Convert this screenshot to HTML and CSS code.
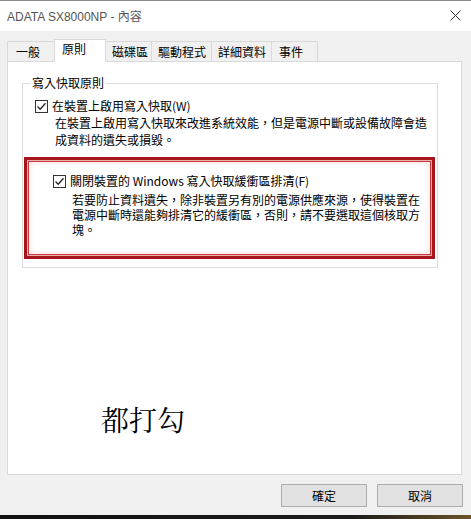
FILE: index.html
```html
<!DOCTYPE html>
<html lang="zh-Hant">
<head>
  <meta charset="UTF-8">
  <title>ADATA SX8000NP - 內容</title>
  <link rel="stylesheet" href="styles.css">
</head>
<body>
  <div class="titlebar">
    <span class="title">ADATA SX8000NP - 內容</span>
    <svg class="close" width="11" height="11" viewBox="0 0 11 11">
      <path d="M0.5 0.5 L10.5 10.5 M10.5 0.5 L0.5 10.5" stroke="#333" stroke-width="1" fill="none"/>
    </svg>
  </div>

  <div class="tabs">
    <div class="tab first">一般</div>
    <div class="tab active">原則</div>
    <div class="tab w47">磁碟區</div>
    <div class="tab w61">驅動程式</div>
    <div class="tab w61">詳細資料</div>
    <div class="tab w47">事件</div>
  </div>

  <div class="panel">
    <fieldset class="group">
      <legend>寫入快取原則</legend>
      <label class="option first-option">
        <span class="check"><svg width="13" height="13" viewBox="0 0 13 13"><rect x="0.5" y="0.5" width="12" height="12" fill="#fff" stroke="#333"/><path d="M2.5 6.5 L5.2 9.2 L10.5 3.2" stroke="#222" stroke-width="1.3" fill="none"/></svg></span>
        <span>在裝置上啟用寫入快取(W)</span>
      </label>
      <p class="desc desc-one">在裝置上啟用寫入快取來改進系統效能，但是電源中斷或設備故障會造成資料的遺失或損毀。</p>

      <div class="marked">
        <label class="option">
          <span class="check"><svg width="13" height="13" viewBox="0 0 13 13"><rect x="0.5" y="0.5" width="12" height="12" fill="#fff" stroke="#333"/><path d="M2.5 6.5 L5.2 9.2 L10.5 3.2" stroke="#222" stroke-width="1.3" fill="none"/></svg></span>
          <span>關閉裝置的 Windows 寫入快取緩衝區排清(F)</span>
        </label>
        <p class="desc desc-two">若要防止資料遺失，除非裝置另有別的電源供應來源，使得裝置在電源中斷時還能夠排清它的緩衝區，否則，請不要選取這個核取方塊。</p>
      </div>
    </fieldset>

    <div class="note">都打勾</div>
  </div>

  <div class="buttons">
    <button>確定</button>
    <button>取消</button>
  </div>
  <div class="desktop"></div>
</body>
</html>
```

FILE: styles.css
```css
* {
  margin: 0;
  padding: 0;
  box-sizing: border-box;
}

body {
  background-color: #f0f0f0;
  font-family: "Noto Sans CJK TC", sans-serif;
  font-size: 12px;
  color: #000;
  width: 471px;
  height: 519px;
  overflow: hidden;
}

.titlebar {
  height: 31px;
  background-color: #fff;
  border-top: 1px solid #8c8c8c;
  display: flex;
  align-items: center;
  justify-content: space-between;
  padding: 0 10px 0 7px;
}

.title {
  font-family: "Liberation Sans", "Noto Sans CJK TC", sans-serif;
  font-size: 12px;
  color: #555;
  margin-top: -2px;
}

.close {
  margin-top: -2px;
}

.tabs {
  display: flex;
  align-items: flex-end;
  height: 22px;
  margin-top: 8px;
  padding-left: 7px;
}

.tab {
  height: 20px;
  border: 1px solid #d9d9d9;
  border-bottom: none;
  margin-left: -1px;
  padding: 1px 0 0 6px;
  line-height: 18px;
  white-space: nowrap;
}

.tab.first {
  margin-left: 0;
  width: 48px;
  padding-left: 8px;
}

.tab.w47 { width: 47px; }
.tab.w61 { width: 61px; }
.tab.w47:last-child { padding-left: 7px; }

.tab.active {
  position: relative;
  z-index: 1;
  width: 52px;
  height: 23px;
  margin-bottom: -1px;
  background-color: #fff;
  padding: 0 0 0 7px;
  line-height: 17px;
}

.panel {
  width: 455px;
  height: 414px;
  margin-left: 7px;
  background-color: #fff;
  border: 1px solid #d9d9d9;
  padding-top: 13px;
}

.group {
  margin: 0 23px 0 14px;
  border: 1px solid #dcdcdc;
  padding: 7px 1px 8px 1px;
}

.group legend {
  margin-left: 6px;
  padding: 0 2px;
  line-height: 16px;
  color: #000;
}

.option {
  display: flex;
  align-items: center;
  gap: 4px;
  height: 16px;
  line-height: 16px;
}

.check {
  display: flex;
  width: 13px;
  height: 13px;
}

.first-option {
  margin-left: 11px;
}

.desc {
  line-height: 17px;
}

.desc-one {
  margin-left: 31px;
  width: 376px;
}

.marked {
  margin: 9px 1px 0 0;
  border: 3px solid #a8161c;
  box-shadow: inset 0 0 0 1px #eab0b0, inset 0 0 0 2px #c8383d, inset 0 0 5px 3px rgba(210, 60, 60, 0.14);
  padding: 13px 0 19px 26px;
}

.desc-two {
  margin: 3px 0 0 19px;
  width: 352px;
  line-height: 15px;
}

.note {
  margin: 135px 0 0 93px;
  font-family: "Noto Serif CJK TC", "Noto Sans CJK TC", serif;
  font-size: 28px;
  line-height: 32px;
  color: #000;
}

.buttons {
  display: flex;
  justify-content: flex-end;
  gap: 10px;
  margin-top: 9px;
  padding-right: 8px;
}

.buttons button {
  width: 86px;
  height: 23px;
  background-color: #e1e1e1;
  border: 1px solid #adadad;
  font-family: "Noto Sans CJK TC", sans-serif;
  font-size: 12px;
  line-height: 20px;
  color: #000;
}

.desktop {
  margin-top: 8px;
  height: 4px;
  background: linear-gradient(90deg, #111 0%, #1c1c1c 75%, #6b5428 100%);
}
```
